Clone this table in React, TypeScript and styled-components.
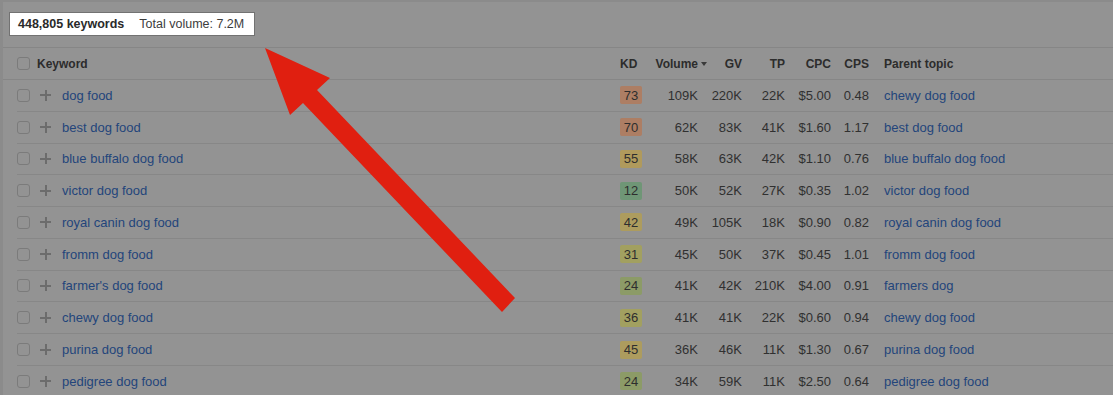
import { createGlobalStyle, styled } from 'styled-components';

const GlobalStyle = createGlobalStyle`
    html, body {
        margin: 0;
        padding: 0;
        background: #939393;
    }
    body {
        font-family: "Liberation Sans", Arial, Helvetica, sans-serif;
        -webkit-font-smoothing: antialiased;
    }
`;

const Page = styled.div`
    position: relative;
    width: 1113px;
    height: 395px;
    overflow: hidden;
    box-sizing: border-box;
    border-left: 3px solid #8b8b8b;
    border-top: 2px solid #8b8b8b;
    background: #939393;
`;

const Toolbar = styled.div`
    display: flex;
    align-items: flex-start;
    height: 46px;
    padding: 10px 0 0 6px;
    border-bottom: 1px solid #868686;
    box-sizing: border-box;
`;

const Summary = styled.div`
    display: flex;
    align-items: center;
    gap: 15px;
    height: 24px;
    padding: 0 10px 0 8px;
    background: #ffffff;
    border: 1px solid #727272;
    box-sizing: border-box;
    font-size: 12.5px;
    color: #333333;
`;

const Strong = styled.span`
    font-weight: bold;
    color: #2a2a2a;
`;

const Muted = styled.span`
    color: #3c3c3c;
`;

const numCols = `22px 65px 35px 43px 46px 38px 1fr`;

const HeaderRow = styled.div`
    display: grid;
    grid-template-columns: 20px 583px ${numCols};
    align-items: center;
    height: 32px;
    padding-left: 14px;
    border-bottom: 1px solid #868686;
    box-sizing: border-box;
    font-size: 12px;
    font-weight: bold;
    color: #2c2c2c;
`;

const Row = styled.div`
    display: grid;
    grid-template-columns: 23px 22px 558px ${numCols};
    align-items: center;
    height: 31.78px;
    margin-left: 14px;
    border-bottom: 1px solid #878787;
    box-sizing: border-box;
    font-size: 13px;
    color: #303030;
`;

const Check = styled.span`
    display: block;
    width: 13px;
    height: 13px;
    border: 1px solid #7b7b7b;
    border-radius: 3px;
    box-sizing: border-box;
`;

const PlusMark = styled.span`
    position: relative;
    display: block;
    width: 11px;
    height: 11px;
    &::before, &::after {
        content: "";
        position: absolute;
        background: #6c6c6c;
    }
    &::before {
        left: 0;
        top: 4.5px;
        width: 11px;
        height: 2px;
    }
    &::after {
        left: 4.5px;
        top: 0;
        width: 2px;
        height: 11px;
    }
`;

const Link = styled.span`
    color: #23457b;
    white-space: nowrap;
`;

const Num = styled.span<{ $pad?: number }>`
    text-align: right;
    padding-right: ${(p) => p.$pad ?? 0}px;
    white-space: nowrap;
`;

const HeadNum = styled.span`
    display: flex;
    justify-content: flex-end;
    align-items: center;
    gap: 3px;
    white-space: nowrap;
`;

const SortCaret = styled.span`
    width: 0;
    height: 0;
    border-left: 3.5px solid transparent;
    border-right: 3.5px solid transparent;
    border-top: 4px solid #3a3a3a;
`;

const Topic = styled.span`
    padding-left: 15px;
    white-space: nowrap;
`;

const Badge = styled.span<{ $bg: string }>`
    display: flex;
    align-items: center;
    justify-content: center;
    width: 22px;
    height: 18px;
    border-radius: 2px;
    background: ${(p) => p.$bg};
    color: #2e2e2e;
    font-size: 13px;
`;

const ArrowLayer = styled.svg`
    position: absolute;
    left: -3px;
    top: -2px;
    pointer-events: none;
`;

const kdColor = (kd: number) => {
    if (kd >= 70) return '#ad7e64';
    if (kd >= 50) return '#b09a5c';
    if (kd >= 40) return '#ad9c5e';
    if (kd >= 30) return '#a2a060';
    if (kd >= 20) return '#8c9b67';
    return '#6f9676';
};

const rows = [
    ['dog food', 73, '109K', '220K', '22K', '$5.00', '0.48', 'chewy dog food'],
    ['best dog food', 70, '62K', '83K', '41K', '$1.60', '1.17', 'best dog food'],
    ['blue buffalo dog food', 55, '58K', '63K', '42K', '$1.10', '0.76', 'blue buffalo dog food'],
    ['victor dog food', 12, '50K', '52K', '27K', '$0.35', '1.02', 'victor dog food'],
    ['royal canin dog food', 42, '49K', '105K', '18K', '$0.90', '0.82', 'royal canin dog food'],
    ['fromm dog food', 31, '45K', '50K', '37K', '$0.45', '1.01', 'fromm dog food'],
    ["farmer's dog food", 24, '41K', '42K', '210K', '$4.00', '0.91', 'farmers dog'],
    ['chewy dog food', 36, '41K', '41K', '22K', '$0.60', '0.94', 'chewy dog food'],
    ['purina dog food', 45, '36K', '46K', '11K', '$1.30', '0.67', 'purina dog food'],
    ['pedigree dog food', 24, '34K', '59K', '11K', '$2.50', '0.64', 'pedigree dog food'],
] as const;

export default function App() {
    return (
        <>
            <GlobalStyle />
            <Page>
                <Toolbar>
                    <Summary>
                        <Strong>448,805 keywords</Strong>
                        <Muted>Total volume: 7.2M</Muted>
                    </Summary>
                </Toolbar>

                <HeaderRow>
                    <Check />
                    <span>Keyword</span>
                    <span>KD</span>
                    <HeadNum>Volume<SortCaret /></HeadNum>
                    <HeadNum>GV</HeadNum>
                    <HeadNum>TP</HeadNum>
                    <HeadNum>CPC</HeadNum>
                    <HeadNum>CPS</HeadNum>
                    <Topic>Parent topic</Topic>
                </HeaderRow>

                {rows.map(([kw, kd, vol, gv, tp, cpc, cps, parent]) => (
                    <Row key={kw}>
                        <Check />
                        <PlusMark />
                        <Link>{kw}</Link>
                        <Badge $bg={kdColor(kd)}>{kd}</Badge>
                        <Num $pad={9}>{vol}</Num>
                        <Num>{gv}</Num>
                        <Num>{tp}</Num>
                        <Num>{cpc}</Num>
                        <Num>{cps}</Num>
                        <Topic><Link>{parent}</Link></Topic>
                    </Row>
                ))}

                {/* red pointer drawn over the table */}
                <ArrowLayer width="1113" height="395" viewBox="0 0 1113 395">
                    <polygon
                        points="265,48 330,78 317,90 515,298 502,312 303,103 290,115"
                        fill="#e01f10"
                    />
                </ArrowLayer>
            </Page>
        </>
    );
}
